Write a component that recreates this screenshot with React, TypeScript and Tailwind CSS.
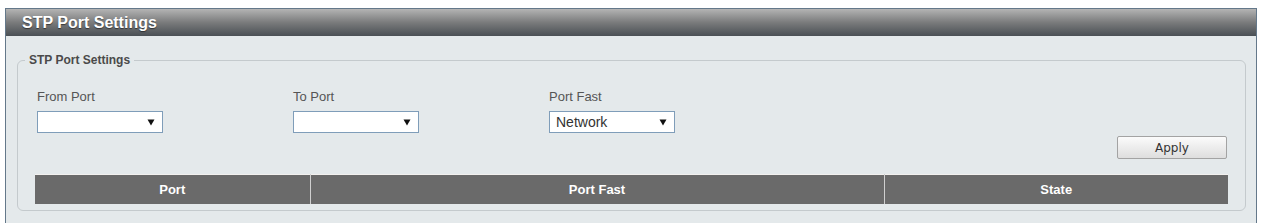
const FONT = "font-['Liberation_Sans',Arial,sans-serif]";

function Arrow() {
  return (
    <svg width="8" height="7" viewBox="0 0 8 7" className="shrink-0">
      <path d="M0.5 0.5 L7.5 0.5 L4 6.5 Z" fill="#111" />
    </svg>
  );
}

function FakeSelect({ value }: { value?: string }) {
  return (
    <div className="mt-[7px] flex h-[22px] w-[126px] items-center justify-between border border-[#7f9db9] bg-white pl-[6px] pr-[7px]">
      <span className="text-[14px] leading-[16px] text-[#333]">{value ?? ""}</span>
      <Arrow />
    </div>
  );
}

const fields = [
  { label: "From Port", value: "" },
  { label: "To Port", value: "" },
  { label: "Port Fast", value: "Network" },
];

export default function App() {
  return (
    <div className={`h-[223px] w-[1262px] overflow-hidden bg-white pl-[5px] pt-[8px] ${FONT}`}>
      <div className="h-[215px] w-[1252px] border border-b-0 border-[#64788a] bg-[#e4e9eb]">
        <div className="h-[27px] bg-gradient-to-b from-[#b4b4b4] via-[#7a7b7c] to-[#4a5055] pl-[16px] text-[16px] font-bold leading-[27px] text-white [text-shadow:0_1px_1px_rgba(0,0,0,0.5)]">
          STP Port Settings
        </div>

        <fieldset className="ml-[11px] mr-[10px] mt-[17px] rounded-[6px] border border-[#c4cacd] p-0">
          <legend className="ml-[7px] px-[4px] text-[12px] font-bold leading-[14px] text-[#4a4a4a]">
            STP Port Settings
          </legend>

          <div className="px-[17px] pb-[6px] pt-[22px]">
            <div className="ml-[2px] flex">
              {fields.map((f) => (
                <div key={f.label} className="w-[256px]">
                  <div className="text-[13px] leading-[15px] text-[#555]">{f.label}</div>
                  <FakeSelect value={f.value} />
                </div>
              ))}
            </div>

            <div className="mt-[3px] flex justify-end pr-[1px]">
              <button className="h-[23px] w-[110px] rounded-[2px] border border-[#a3a3a3] bg-gradient-to-b from-[#fbfbfb] to-[#dedede] font-['DejaVu_Sans',sans-serif] text-[12px] text-[#333]">
                Apply
              </button>
            </div>

            <table className="mt-[15px] w-full border-collapse border-t border-[#f3f1ef] text-[13px] font-bold text-white">
              <thead>
                <tr className="h-[29px] bg-[#6a6a6a]">
                  <th className="w-[275px] font-bold">Port</th>
                  <th className="w-[574px] border-l border-[#cfcfcf] font-bold">Port Fast</th>
                  <th className="border-l border-[#cfcfcf] font-bold">State</th>
                </tr>
              </thead>
            </table>
          </div>
        </fieldset>
      </div>
    </div>
  );
}
